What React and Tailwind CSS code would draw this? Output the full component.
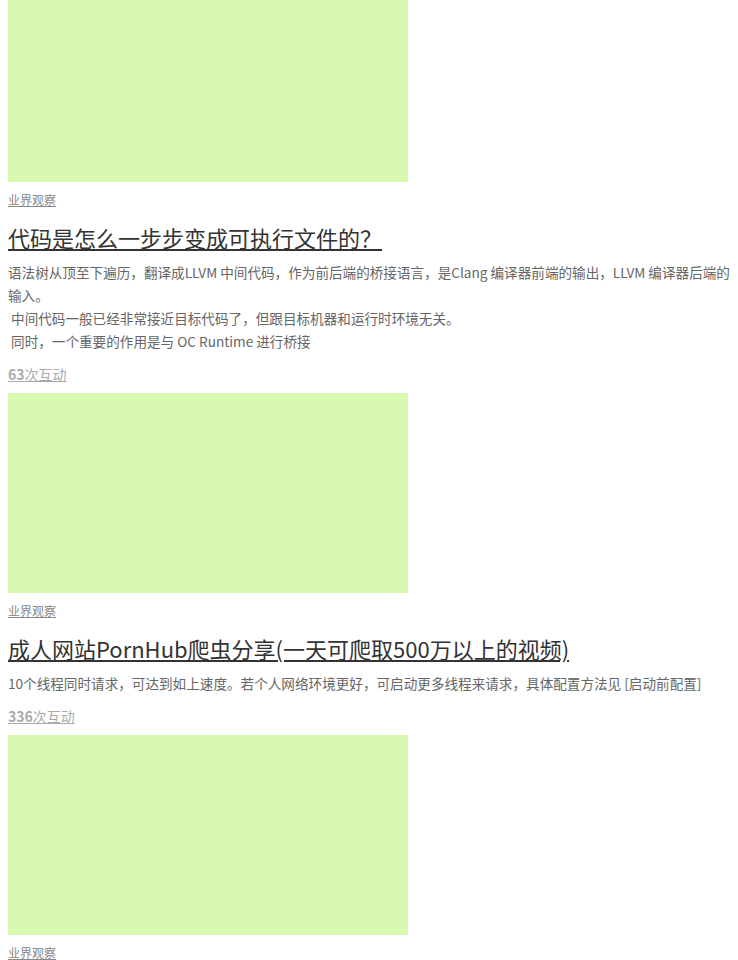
import React from 'react';

const posts = [
  {
    id: 1,
    category: '业界观察',
    title: '代码是怎么一步步变成可执行文件的？',
    summary:
      '语法树从顶至下遍历，翻译成LLVM 中间代码，作为前后端的桥接语言，是Clang 编译器前端的输出，LLVM 编译器后端的输入。\n 中间代码一般已经非常接近目标代码了，但跟目标机器和运行时环境无关。\n 同时，一个重要的作用是与 OC Runtime 进行桥接',
    interactions: 63,
  },
  {
    id: 2,
    category: '业界观察',
    title: '成人网站PornHub爬虫分享(一天可爬取500万以上的视频)',
    summary:
      '10个线程同时请求，可达到如上速度。若个人网络环境更好，可启动更多线程来请求，具体配置方法见 [启动前配置]',
    interactions: 336,
  },
  {
    id: 3,
    category: '业界观察',
    title: '',
    summary: '',
    interactions: 0,
  },
];

function PostItem({ post }) {
  return (
    <article className="flex flex-col items-start mb-[9.5px]">
      <div className="w-[400px] h-[200px] bg-[#d9f8b0]" />
      <a href="#" className="mt-[9px] text-[12px] leading-[18px] text-[#888888] underline">
        {post.category}
      </a>
      {post.title && (
        <a href="#" className="mt-[13px] text-[22px] leading-[30px] text-[#333333] underline">
          {post.title}
        </a>
      )}
      {post.summary && (
        <p className="mt-[9px] text-[13.6px] leading-[23px] text-[#666666] whitespace-pre-wrap">
          {post.summary}
        </p>
      )}
      {post.title && (
        <a href="#" className="mt-[10.5px] text-[14px] leading-[20px] text-[#aaaaaa] underline">
          <span className="font-bold">{post.interactions}</span>次互动
        </a>
      )}
    </article>
  );
}

export default function App() {
  return (
    <div
      className="w-[738px] h-[960px] overflow-hidden bg-white"
      style={{ fontFamily: '"Noto Sans CJK SC", "Noto Sans", sans-serif' }}
    >
      <div className="px-2 -mt-[18px]">
        {posts.map(p => (
          <PostItem key={p.id} post={p} />
        ))}
      </div>
    </div>
  );
}
